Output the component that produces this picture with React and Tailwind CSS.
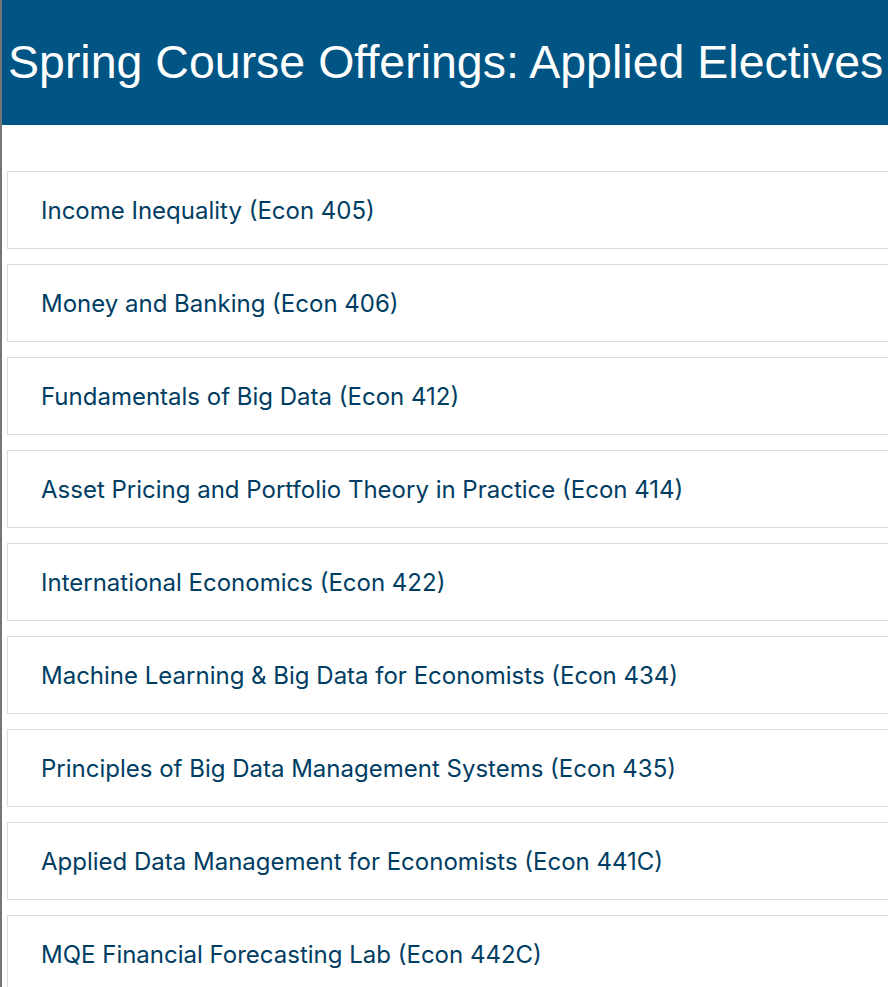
export default function App() {
  const courses = [
    "Income Inequality (Econ 405)",
    "Money and Banking (Econ 406)",
    "Fundamentals of Big Data (Econ 412)",
    "Asset Pricing and Portfolio Theory in Practice (Econ 414)",
    "International Economics (Econ 422)",
    "Machine Learning & Big Data for Economists (Econ 434)",
    "Principles of Big Data Management Systems (Econ 435)",
    "Applied Data Management for Economists (Econ 441C)",
    "MQE Financial Forecasting Lab (Econ 442C)",
  ];
  return (
    <div className="w-[888px] h-[987px] overflow-hidden bg-white flex">
      <div className="w-[2px] shrink-0 bg-[#757575]" />
      <div className="flex-1 flex flex-col min-w-0">
        <div className="h-[125px] shrink-0 bg-[#005584] flex items-center pl-[6px]">
          <h1 className="text-white text-[46.5px] leading-none whitespace-nowrap" style={{ fontFamily: '"Liberation Sans", Arial, sans-serif' }}>
            Spring Course Offerings: Applied Electives
          </h1>
        </div>
        <div className="pt-[46px] pl-[5px] flex flex-col gap-[15px]">
          {courses.map((c) => (
            <div key={c} className="w-[920px] h-[78px] shrink-0 border border-[#dcdcdc] flex items-center pl-[33px] pt-[2px]">
              <span className="text-[#003d63] text-[24px] whitespace-nowrap" style={{ fontFamily: 'Inter, "Noto Sans", sans-serif' }}>{c}</span>
            </div>
          ))}
        </div>
      </div>
    </div>
  );
}
